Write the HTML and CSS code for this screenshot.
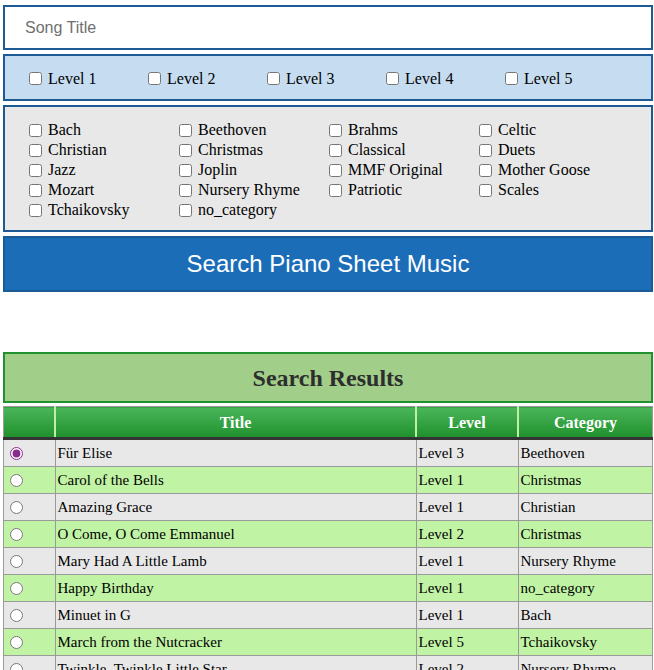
FILE: index.html
```html
<!DOCTYPE html>
<html>
<head>
<meta charset="utf-8">
<link rel="stylesheet" href="styles.css">
</head>
<body>
<div class="page">
  <input class="title-input" type="text" placeholder="Song Title">
  <div class="levels">
    <label class="lvl"><input type="checkbox"><span>Level 1</span></label>
    <label class="lvl"><input type="checkbox"><span>Level 2</span></label>
    <label class="lvl"><input type="checkbox"><span>Level 3</span></label>
    <label class="lvl"><input type="checkbox"><span>Level 4</span></label>
    <label class="lvl"><input type="checkbox"><span>Level 5</span></label>
  </div>
  <div class="cats">
    <label class="cat"><input type="checkbox"><span>Bach</span></label>
    <label class="cat"><input type="checkbox"><span>Beethoven</span></label>
    <label class="cat"><input type="checkbox"><span>Brahms</span></label>
    <label class="cat"><input type="checkbox"><span>Celtic</span></label>
    <label class="cat"><input type="checkbox"><span>Christian</span></label>
    <label class="cat"><input type="checkbox"><span>Christmas</span></label>
    <label class="cat"><input type="checkbox"><span>Classical</span></label>
    <label class="cat"><input type="checkbox"><span>Duets</span></label>
    <label class="cat"><input type="checkbox"><span>Jazz</span></label>
    <label class="cat"><input type="checkbox"><span>Joplin</span></label>
    <label class="cat"><input type="checkbox"><span>MMF Original</span></label>
    <label class="cat"><input type="checkbox"><span>Mother Goose</span></label>
    <label class="cat"><input type="checkbox"><span>Mozart</span></label>
    <label class="cat"><input type="checkbox"><span>Nursery Rhyme</span></label>
    <label class="cat"><input type="checkbox"><span>Patriotic</span></label>
    <label class="cat"><input type="checkbox"><span>Scales</span></label>
    <label class="cat"><input type="checkbox"><span>Tchaikovsky</span></label>
    <label class="cat"><input type="checkbox"><span>no_category</span></label>
  </div>
  <button class="search-btn" type="button">Search Piano Sheet Music</button>

  <h2 class="results-head">Search Results</h2>
  <table class="results">
    <thead>
      <tr><th class="c-sel"></th><th class="c-title">Title</th><th class="c-level">Level</th><th class="c-cat">Category</th></tr>
    </thead>
    <tbody>
      <tr class="odd"><td class="sel"><input type="radio" name="song" checked></td><td>Für Elise</td><td>Level 3</td><td>Beethoven</td></tr>
      <tr class="even"><td class="sel"><input type="radio" name="song"></td><td>Carol of the Bells</td><td>Level 1</td><td>Christmas</td></tr>
      <tr class="odd"><td class="sel"><input type="radio" name="song"></td><td>Amazing Grace</td><td>Level 1</td><td>Christian</td></tr>
      <tr class="even"><td class="sel"><input type="radio" name="song"></td><td>O Come, O Come Emmanuel</td><td>Level 2</td><td>Christmas</td></tr>
      <tr class="odd"><td class="sel"><input type="radio" name="song"></td><td>Mary Had A Little Lamb</td><td>Level 1</td><td>Nursery Rhyme</td></tr>
      <tr class="even"><td class="sel"><input type="radio" name="song"></td><td>Happy Birthday</td><td>Level 1</td><td>no_category</td></tr>
      <tr class="odd"><td class="sel"><input type="radio" name="song"></td><td>Minuet in G</td><td>Level 1</td><td>Bach</td></tr>
      <tr class="even"><td class="sel"><input type="radio" name="song"></td><td>March from the Nutcracker</td><td>Level 5</td><td>Tchaikovsky</td></tr>
      <tr class="odd"><td class="sel"><input type="radio" name="song"></td><td>Twinkle, Twinkle Little Star</td><td>Level 2</td><td>Nursery Rhyme</td></tr>
    </tbody>
  </table>
</div>
</body>
</html>
```

FILE: styles.css
```css
html, body {
  margin: 0;
  padding: 0;
  background: #ffffff;
}
body {
  font-family: "Liberation Serif", "Times New Roman", serif;
  font-size: 16px;
  color: #000;
}
.page {
  width: 650px;
  padding: 5px 1px 0 3px;
  display: flex;
  flex-direction: column;
}
.title-input {
  box-sizing: border-box;
  width: 650px;
  height: 45px;
  margin: 0;
  border: 2px solid #1d5a94;
  padding: 0 20px;
  font-family: "Liberation Sans", Arial, sans-serif;
  font-size: 16px;
  outline: none;
  background: #fff;
}
.title-input::placeholder {
  color: #6f6f6f;
}
.levels {
  box-sizing: border-box;
  margin-top: 4px;
  height: 47px;
  border: 2px solid #1d5a94;
  background: #c6ddf1;
  display: flex;
  align-items: center;
  padding: 2px 0 0 24px;
}
.lvl {
  width: 119px;
  display: flex;
  align-items: center;
  line-height: 20px;
}
input[type="checkbox"] {
  width: 13px;
  height: 13px;
  margin: 0 6px 0 0;
}
.cats {
  box-sizing: border-box;
  margin-top: 4px;
  height: 127px;
  border: 2px solid #1d5a94;
  background: #e8e8e8;
  padding: 13px 0 0 24px;
  display: grid;
  grid-template-columns: repeat(4, 150px);
  grid-auto-rows: 20px;
  align-content: start;
}
.cat {
  display: flex;
  align-items: center;
  line-height: 20px;
}
.search-btn {
  box-sizing: border-box;
  margin: 4px 0 0 0;
  width: 650px;
  height: 56px;
  border: 2px solid #1b5a93;
  background: #1b6db8;
  color: #fff;
  font-family: "Liberation Sans", Arial, sans-serif;
  font-size: 24px;
  padding: 0;
  cursor: pointer;
}
.results-head {
  box-sizing: border-box;
  margin: 60px 0 0 0;
  height: 51px;
  border: 2px solid #239030;
  background: #a1cf8a;
  color: #2e2e2e;
  font-size: 24px;
  font-weight: bold;
  text-align: center;
  line-height: 49px;
}
.results {
  margin-top: 3px;
  width: 650px;
  border-collapse: collapse;
  table-layout: fixed;
  font-size: 15px;
}
.results th {
  height: 29px;
  padding: 1px 0 0 0;
  background: linear-gradient(#4ab65a, #20902c);
  color: #fff;
  font-size: 16px;
  font-weight: bold;
  border-top: 1px solid #9a9a9a;
  border-right: 2px solid #bff0a2;
  border-bottom: 3px solid #333;
  text-align: center;
}
.results th.c-sel { width: 50px; border-left: 1px solid #9a9a9a; }
.results th.c-title { width: 359px; }
.results th.c-level { width: 100px; }
.results th.c-cat { border-right: 1px solid #9a9a9a; }
.results td {
  height: 26px;
  padding: 0 0 0 2px;
  border: 1px solid #9a9a9a;
  white-space: nowrap;
  overflow: hidden;
}
.results td.sel {
  padding-left: 6px;
}
input[type="radio"] {
  width: 13px;
  height: 13px;
  margin: 0;
  display: block;
  accent-color: #8a2b8e;
}
.results tr.odd td { background: #e8e8e8; }
.results tr.even td { background: #c1f3a5; }
```
